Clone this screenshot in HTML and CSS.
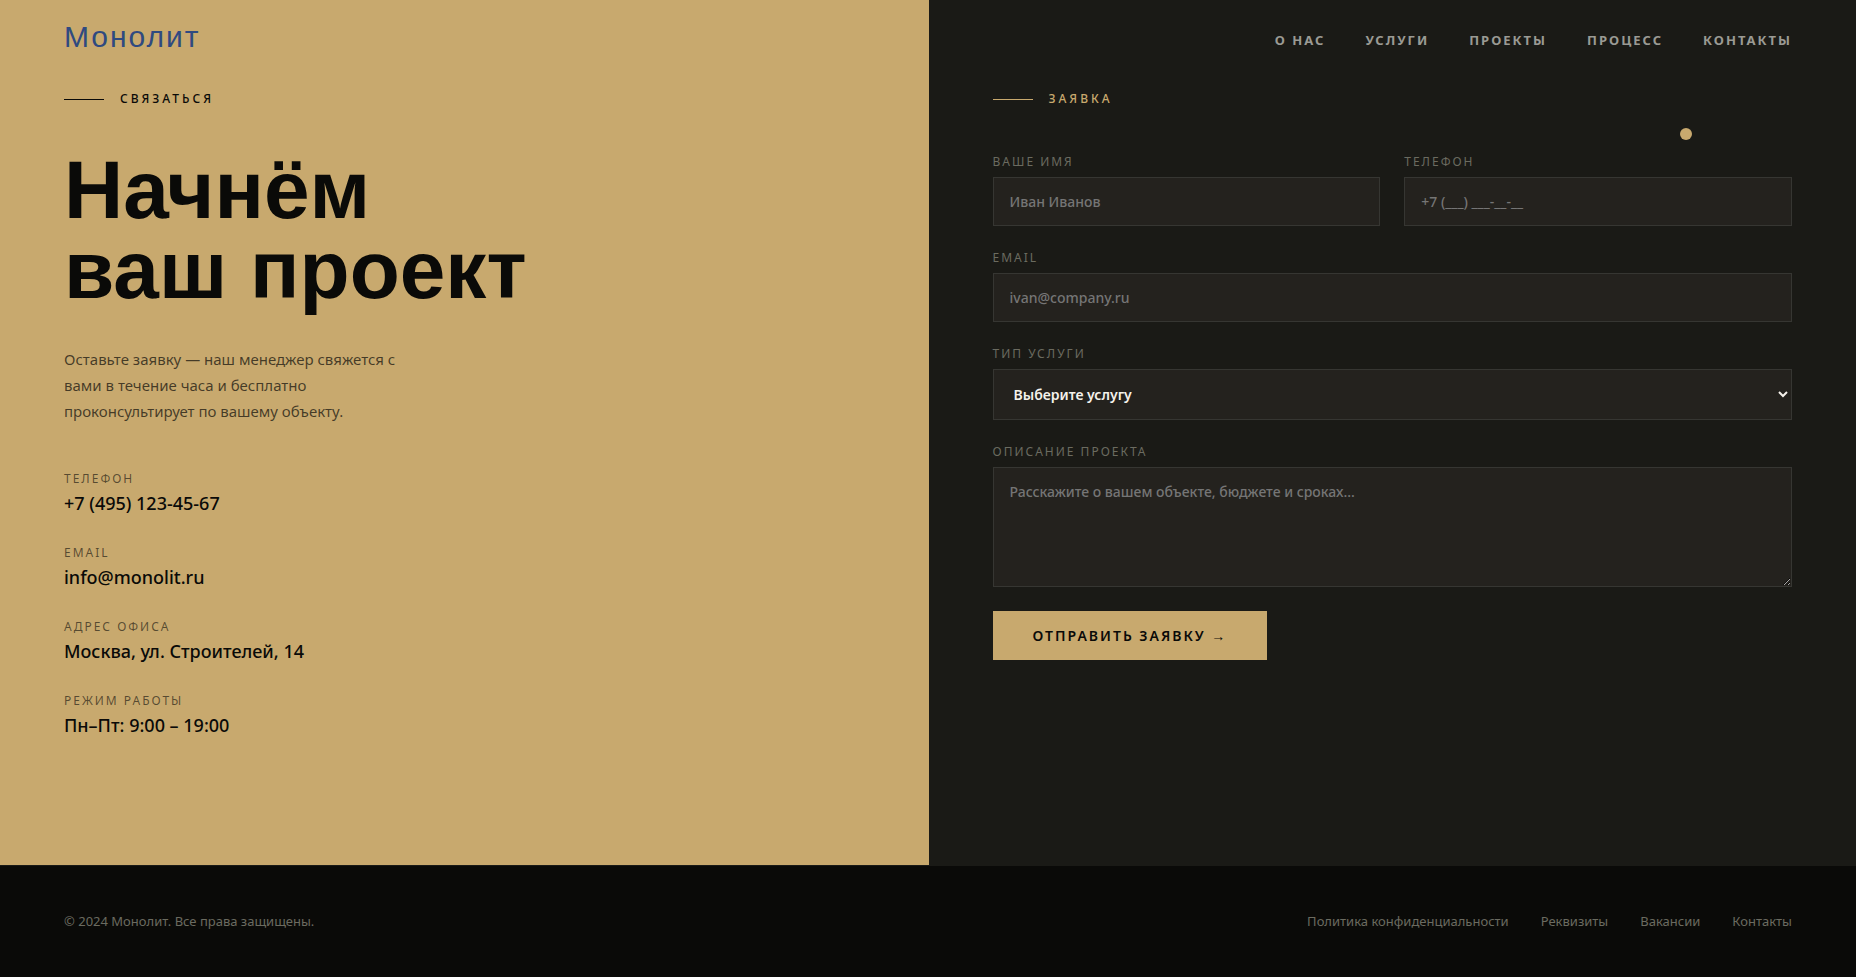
FILE: index.html
```html
<!DOCTYPE html>
<html lang="ru">
<head>
    <meta charset="UTF-8">
    <meta name="viewport" content="width=device-width, initial-scale=1.0">
    <title>Монолит</title>
    <link rel="stylesheet" href="styles.css">
</head>
<body>
    <div class="cursor"></div>

    <header class="header">
        <a href="#" class="logo">Монолит</a>
        <nav class="nav">
            <a href="#about">О нас</a>
            <a href="#services">Услуги</a>
            <a href="#projects">Проекты</a>
            <a href="#process">Процесс</a>
            <a href="#contact">Контакты</a>
        </nav>
    </header>

    <section class="contact" id="contact">
        <div class="contact-info">
            <div class="section-tag section-tag-dark">Связаться</div>
            <h2 class="contact-title">Начнём<br>ваш проект</h2>
            <p class="contact-text">Оставьте заявку — наш менеджер свяжется с вами в течение часа и бесплатно проконсультирует по вашему объекту.</p>
            <dl class="details">
                <div class="detail">
                    <dt>Телефон</dt>
                    <dd>+7 (495) 123-45-67</dd>
                </div>
                <div class="detail">
                    <dt>Email</dt>
                    <dd>info@monolit.ru</dd>
                </div>
                <div class="detail">
                    <dt>Адрес офиса</dt>
                    <dd>Москва, ул. Строителей, 14</dd>
                </div>
                <div class="detail">
                    <dt>Режим работы</dt>
                    <dd>Пн–Пт: 9:00 – 19:00</dd>
                </div>
            </dl>
        </div>

        <div class="contact-form">
            <div class="section-tag">Заявка</div>
            <form class="form">
                <div class="form-row">
                    <div class="form-group">
                        <label for="name">Ваше имя</label>
                        <input type="text" id="name" placeholder="Иван Иванов">
                    </div>
                    <div class="form-group">
                        <label for="phone">Телефон</label>
                        <input type="tel" id="phone" placeholder="+7 (___) ___-__-__">
                    </div>
                </div>
                <div class="form-group">
                    <label for="email">Email</label>
                    <input type="email" id="email" placeholder="ivan@company.ru">
                </div>
                <div class="form-group">
                    <label for="service">Тип услуги</label>
                    <select id="service">
                        <option>Выберите услугу</option>
                    </select>
                </div>
                <div class="form-group">
                    <label for="message">Описание проекта</label>
                    <textarea id="message" placeholder="Расскажите о вашем объекте, бюджете и сроках..."></textarea>
                </div>
                <button type="submit" class="submit">Отправить заявку →</button>
            </form>
        </div>
    </section>

    <footer class="footer">
        <p>© 2024 Монолит. Все права защищены.</p>
        <nav class="footer-links">
            <a href="#">Политика конфиденциальности</a>
            <a href="#">Реквизиты</a>
            <a href="#">Вакансии</a>
            <a href="#">Контакты</a>
        </nav>
    </footer>
</body>
</html>
```
FILE: styles.css
```css
:root {
    --black: #0a0a08;
    --dark: #1a1a16;
    --field: #24221e;
    --line: #363632;
    --gold: #c8a96e;
    --muted: #6b6b60;
    --light: #f5f2ec;
}

* {
    margin: 0;
    padding: 0;
    box-sizing: border-box;
}

body {
    font-family: "Noto Sans", "Open Sans", sans-serif;
    background: var(--black);
    color: var(--light);
    min-height: 100vh;
    display: flex;
    flex-direction: column;
}

a {
    color: inherit;
    text-decoration: none;
}

/* Custom cursor dot */
.cursor {
    position: fixed;
    left: 1680px;
    top: 128px;
    width: 12px;
    height: 12px;
    border-radius: 50%;
    background: var(--gold);
    pointer-events: none;
    z-index: 20;
}

/* Header lies over the two contact panels */
.header {
    position: absolute;
    top: 0;
    left: 0;
    right: 0;
    display: flex;
    justify-content: space-between;
    align-items: center;
    padding: 20px 64px;
    z-index: 10;
}

.logo {
    font-family: "Liberation Sans", Arial, sans-serif;
    font-size: 30px;
    line-height: 34px;
    letter-spacing: 2px;
    color: #2f4a80;
}

.nav {
    display: flex;
    gap: 40px;
    padding-top: 6px;
    font-size: 13px;
    line-height: 16px;
    font-weight: 700;
    letter-spacing: 2px;
    text-transform: uppercase;
    color: #9a9a94;
}

/* Contact */
.contact {
    flex: 1;
    display: grid;
    grid-template-columns: 1fr 1fr;
    gap: 1px;
    background: var(--gold);
}

.contact-info,
.contact-form {
    padding: 92px 64px 64px;
}

.contact-info {
    color: var(--black);
}

.contact-form {
    background: var(--dark);
}

.section-tag {
    display: flex;
    align-items: center;
    gap: 16px;
    font-size: 12px;
    line-height: 14px;
    font-weight: 500;
    letter-spacing: 3px;
    text-transform: uppercase;
    color: var(--gold);
    margin-bottom: 48px;
}

.section-tag::before {
    content: "";
    width: 40px;
    height: 1px;
    background: currentColor;
}

.section-tag-dark {
    color: var(--black);
    margin-bottom: 44px;
}

.contact-title {
    font-family: "Liberation Sans", Arial, sans-serif;
    font-size: 82px;
    line-height: 80px;
    font-weight: 700;
    margin-bottom: 36px;
}

.contact-text {
    font-size: 15px;
    line-height: 26px;
    max-width: 360px;
    color: rgba(10, 10, 8, 0.7);
    margin-bottom: 48px;
}

.details {
    display: flex;
    flex-direction: column;
    gap: 32px;
}

.detail dt {
    font-size: 12px;
    line-height: 14px;
    letter-spacing: 2px;
    text-transform: uppercase;
    color: rgba(10, 10, 8, 0.6);
    margin-bottom: 6px;
}

.detail dd {
    font-size: 18px;
    line-height: 22px;
    font-weight: 500;
}

/* Form */
.form {
    display: flex;
    flex-direction: column;
    gap: 24px;
}

.form-row {
    display: grid;
    grid-template-columns: 1fr 1fr;
    gap: 24px;
}

.form-group {
    display: flex;
    flex-direction: column;
    gap: 8px;
}

.form-group label {
    font-size: 12px;
    line-height: 15px;
    letter-spacing: 2px;
    text-transform: uppercase;
    color: var(--muted);
}

.form-group input,
.form-group select,
.form-group textarea {
    width: 100%;
    padding: 14px 16px;
    background: var(--field);
    border: 1px solid var(--line);
    border-radius: 0;
    color: var(--light);
    font-family: inherit;
    font-size: 14px;
    line-height: 19px;
    font-weight: 500;
    outline: none;
}

.form-group input {
    height: 49px;
}

.form-group select {
    height: 51px;
    font-weight: 600;
}

.form-group textarea {
    height: 120px;
    resize: vertical;
}

.form-group ::placeholder {
    color: #757575;
}

.submit {
    align-self: flex-start;
    padding: 16px 40px;
    background: var(--gold);
    border: none;
    color: var(--black);
    font-family: inherit;
    font-size: 14px;
    line-height: 17px;
    font-weight: 600;
    letter-spacing: 2px;
    text-transform: uppercase;
    cursor: pointer;
}

/* Footer */
.footer {
    display: flex;
    justify-content: space-between;
    align-items: center;
    padding: 48px 64px;
    border-top: 1px solid var(--dark);
    font-size: 13px;
    line-height: 15px;
    color: var(--muted);
}

.footer-links {
    display: flex;
    gap: 32px;
}
```
